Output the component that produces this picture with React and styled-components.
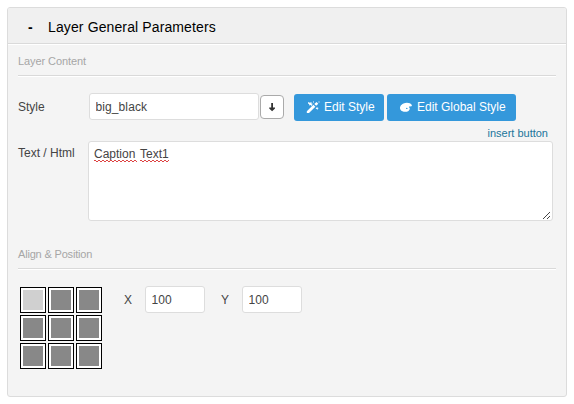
import React from 'react';
import styled, { createGlobalStyle } from 'styled-components';

const GlobalStyle = createGlobalStyle`
  * { box-sizing: border-box; }
  body { margin: 0; background: #fff; font-family: "Liberation Sans", Arial, sans-serif; }
`;

const Panel = styled.section`
  width: 560px;
  height: 390px;
  margin: 7px 0 0 7px;
  border: 1px solid #dcdcdc;
  border-radius: 3px;
  background: #f4f4f4;
  color: #444;
  font-size: 12px;
`;

const Header = styled.header`
  display: flex;
  height: 36px;
  padding: 3px 0 0 20px;
  align-items: center;
  background: #f0f0f0;
  border-bottom: 1px solid #dadada;
  box-shadow: 0 1px 0 #fff;
  border-radius: 2px 2px 0 0;
  color: #000;
`;

const Toggle = styled.span`
  width: 20px;
  font-size: 14px;
  font-weight: bold;
`;

const Title = styled.h1`
  margin: 0;
  font-size: 14px;
  font-weight: normal;
  letter-spacing: 0.12px;
  line-height: 18px;
  white-space: nowrap;
`;

const SectionTitle = styled.h2`
  width: 538px;
  height: 22px;
  margin: ${(p) => p.$top}px 0 0 10px;
  border-bottom: 1px solid #d9d9d9;
  box-shadow: 0 1px 0 #fff;
  color: #a6a6a6;
  font-size: 11px;
  font-weight: normal;
  letter-spacing: ${(p) => p.$tracking}px;
  line-height: 14px;
`;

const StyleRow = styled.div`
  display: flex;
  height: 28px;
  margin: 17px 0 0 10px;
`;

const Label = styled.label`
  width: ${(p) => p.$width}px;
  flex: none;
  line-height: ${(p) => p.$line || 29}px;
  white-space: nowrap;
`;

const Input = styled.input`
  width: ${(p) => p.$width}px;
  height: 27px;
  padding: 0 6px 0 5.5px;
  border: 1px solid #ddd;
  border-radius: 3px;
  outline: none;
  background: #fff;
  color: #444;
  font: 12px "Liberation Sans", Arial, sans-serif;
  letter-spacing: 0.1px;
`;

const DropButton = styled.button`
  display: flex;
  width: 24px;
  height: 24px;
  margin: 2px 10px 0 1px;
  padding: 0;
  align-items: center;
  justify-content: center;
  border: 1px solid #aaa;
  border-radius: 4px;
  background: #fff;
`;

const BlueButton = styled.button`
  display: flex;
  width: ${(p) => p.$width}px;
  height: 27px;
  margin: 1px 3px 0 0;
  padding: 0 0 1px 12px;
  align-items: center;
  gap: 4px;
  border: 0;
  border-radius: 3px;
  background: #3498db;
  color: #fff;
  font: 12px "Liberation Sans", Arial, sans-serif;
  white-space: nowrap;
`;

const InsertLink = styled.a`
  display: block;
  height: 20px;
  margin-right: 18px;
  padding-top: 5px;
  color: #21759b;
  font-size: 11px;
  line-height: 14px;
  text-align: right;
`;

const TextRow = styled.div`
  display: flex;
  height: 80px;
  margin: 0 0 0 10px;
`;

const TextBox = styled.div`
  display: flex;
  width: 465px;
  height: 80px;
  padding: 5px 1px 1px 5px;
  justify-content: space-between;
  border: 1px solid #ddd;
  border-radius: 3px;
  background: #fff;
  line-height: 14px;
`;

const Words = styled.div`
  display: flex;
  height: 17px;
  gap: 3px;
`;

const Word = styled.span`
  display: flex;
  width: ${(p) => p.$width}px;
  flex-direction: column;
  white-space: nowrap;
`;

const Squiggle = styled.svg`
  display: block;
  width: 100%;
  height: 2px;
  margin-top: -1px;
  flex: none;
`;

const Grip = styled.svg`
  align-self: flex-end;
`;

const PositionRow = styled.div`
  display: flex;
  margin: 17px 0 0 12px;
`;

const AlignGrid = styled.div`
  display: grid;
  grid-template-columns: repeat(3, 26px);
  grid-auto-rows: 26px;
  gap: 2px;
  margin: 1px 22px 0 0;
`;

const AlignCell = styled.button`
  padding: 2px;
  border: 1px solid #000;
  background: ${(p) => (p.$active ? '#d0d0d0' : '#888')} content-box;
  box-shadow: inset 0 0 0 2px #fff;
`;

const Spacer = styled.span`
  width: 16px;
`;

const ALIGNMENTS = ['left top', 'center top', 'right top', 'left middle', 'center middle', 'right middle', 'left bottom', 'center bottom', 'right bottom'];

function SpelledWord({ children, width, id }) {
  return (
    <Word $width={width}>
      {children}
      <Squiggle shapeRendering="crispEdges">
        <defs>
          <pattern id={id} width="4" height="2" patternUnits="userSpaceOnUse">
            <path d="M0 .5h2M2 1.5h2" stroke="#d44" />
          </pattern>
        </defs>
        <rect width={width} height="2" fill={`url(#${id})`} />
      </Squiggle>
    </Word>
  );
}

function WandIcon() {
  return (
    <svg width="14" height="13" viewBox="0 0 14 13" fill="#fff">
      <path d="M.8 10.200 7.400 3.800l2 2L3 12H.8z" />
      <path d="M8.300 2.900 10.500.9l1.800 1.800-2.100 2.100zM2.200 1.100l1.700.6L5.500.9l-.1 1.500 2 .6-1.600.6.3 1.600-1.500-1.100L3 4.600l.3-1.400L2 2.500zM11 5.800l.5 1 1.300.2-1.100.8-.3 1.200-.7-1-1.200-.3.900-.7zM12.500.500h1v1h-1zM7 .6h1v1H7z" />
    </svg>
  );
}

function PaletteIcon() {
  return (
    <svg width="14" height="13" viewBox="0 0 14 13">
      <path fill="#fff" d="M4.500 2.500C7.200 1.300 11.500 1.600 12.800 4c.5 1.300-.9 1.500-2.100 1.400-1 0-1 .7-.4 1.200 1 .8.4 2.500-.8 3.300-2.200 1.500-6.500 1.200-8-1.200C.2 6.300 1.700 3.700 4.500 2.500z" />
      <ellipse cx="7.800" cy="7.400" rx=".8" ry=".7" fill="#3498db" />
    </svg>
  );
}

export default function App() {
  return (
    <>
      <GlobalStyle />
      <Panel>
        <Header>
          <Toggle>-</Toggle>
          <Title>Layer General Parameters</Title>
        </Header>
        <SectionTitle $top={10} $tracking={-0.08}>Layer Content</SectionTitle>
        <StyleRow>
          <Label $width={71}>Style</Label>
          <Input $width={170} defaultValue="big_black" />
          <DropButton aria-label="Choose style">
            <svg width="8" height="10" viewBox="0 0 8 10">
              <path d="M3.200 1h1.800v4.500h2v1L4.100 9.300 1.200 6.500v-1h2z" fill="#333" />
            </svg>
          </DropButton>
          <BlueButton $width={90}><WandIcon />Edit Style</BlueButton>
          <BlueButton $width={129}><PaletteIcon />Edit Global Style</BlueButton>
        </StyleRow>
        <InsertLink>insert button</InsertLink>
        <TextRow>
          <Label $width={70} $line={24}>Text / Html</Label>
          <TextBox role="textbox">
            <Words>
              <SpelledWord width={43} id="wave-a">Caption</SpelledWord>
              <SpelledWord width={29} id="wave-b">Text1</SpelledWord>
            </Words>
            <Grip width="8" height="8" viewBox="0 0 8 8" stroke="#444" shapeRendering="crispEdges">
              <path d="M0 7.500h1M1 6.500h1M2 5.500h1M3 4.500h1M4 3.500h1M5 2.500h1M6 1.500h1M4 7.500h1M5 6.500h1M6 5.500h1" />
            </Grip>
          </TextBox>
        </TextRow>
        <SectionTitle $top={26} $tracking={-0.18}>Align &amp; Position</SectionTitle>
        <PositionRow>
          <AlignGrid>
            {ALIGNMENTS.map((name, i) => (
              <AlignCell key={name} aria-label={name} $active={i === 0} />
            ))}
          </AlignGrid>
          <Label $width={21}>X</Label>
          <Input $width={60} defaultValue="100" />
          <Spacer />
          <Label $width={21}>Y</Label>
          <Input $width={60} defaultValue="100" />
        </PositionRow>
      </Panel>
    </>
  );
}
